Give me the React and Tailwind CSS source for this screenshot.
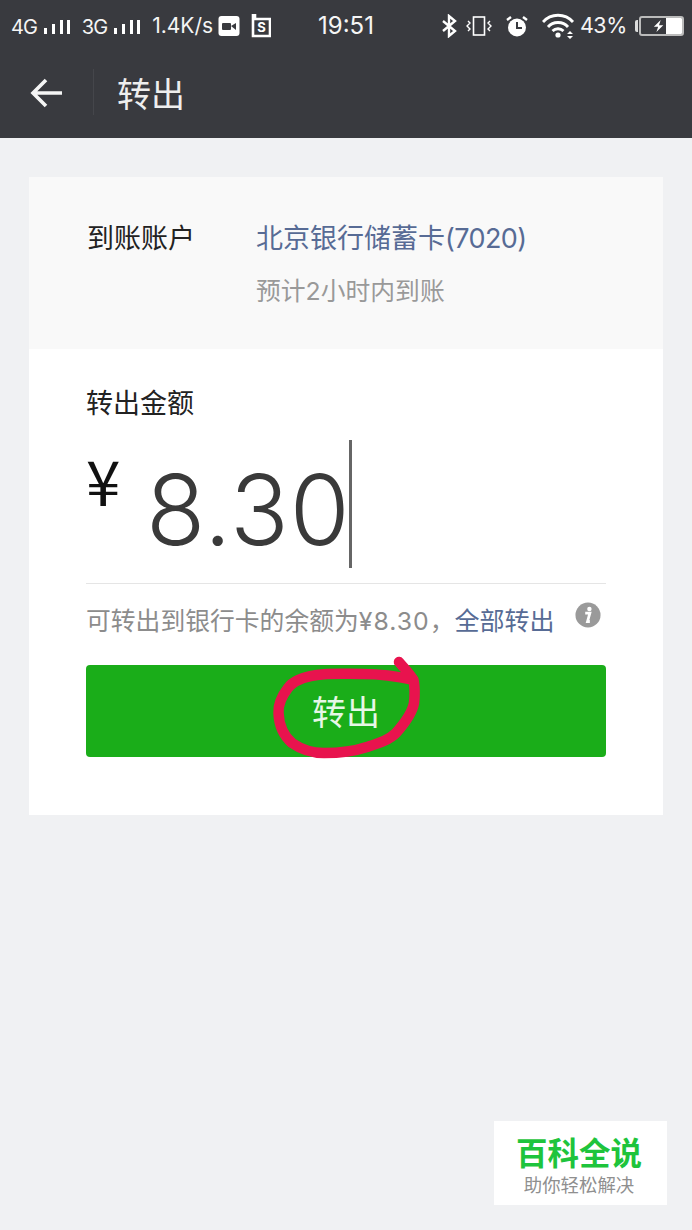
const FONT = "font-['Inter','Noto_Sans_CJK_SC',sans-serif]";

function Bars() {
  return (
    <svg width="28" height="18" viewBox="0 0 28 18" className="shrink-0">
      <rect x="1" y="10" width="3" height="6" fill="#fff" />
      <rect x="9" y="6" width="3" height="10" fill="#fff" />
      <rect x="17" y="2" width="3" height="14" fill="#fff" />
      <rect x="24" y="2" width="3" height="14" fill="#fff" />
    </svg>
  );
}

function StatusBar() {
  return (
    <div className="flex h-[50px] items-center pl-[11px] pt-[1px] text-[#f5f5f5]">
      <span className="text-[20px] tracking-[-1px] leading-none mt-[3px]">4G</span>
      <span className="ml-[6px] mt-[2px]"><Bars /></span>
      <span className="ml-[11px] text-[20px] tracking-[-1px] leading-none mt-[3px]">3G</span>
      <span className="ml-[6px] mt-[2px]"><Bars /></span>
      <span className="ml-[11px] text-[21px] leading-none">1.4K/s</span>
      <svg width="22" height="22" viewBox="0 0 22 22" className="ml-[5px] shrink-0">
        <rect x="0.5" y="1" width="21" height="20" rx="3" fill="#fff" />
        <rect x="4" y="8" width="9" height="7" rx="1" fill="#393a3f" />
        <path d="M13 11l5-3v7z" fill="#393a3f" />
      </svg>
      <svg width="20" height="24" viewBox="0 0 20 24" className="ml-[11px] shrink-0">
        <path d="M2 1v21h17V5H4V1z" fill="none" stroke="#fff" strokeWidth="2.6" />
        <text x="10.5" y="18" fontSize="13" fontWeight="700" textAnchor="middle" fill="#fff" fontFamily="Inter">S</text>
      </svg>
      <span className="ml-[47px] text-[24px] leading-none">19:51</span>
      <svg width="16" height="24" viewBox="0 0 16 24" className="ml-[67px] shrink-0">
        <path d="M2 7l12 10-6 5V2l6 5L2 17" fill="none" stroke="#fff" strokeWidth="2.4" />
      </svg>
      <svg width="28" height="24" viewBox="0 0 28 24" className="ml-[8px] shrink-0">
        <rect x="8.5" y="3" width="11" height="18" fill="none" stroke="#fff" strokeWidth="1.6" />
        <path d="M3 7l2 2-3 3 3 3-2 2M25 7l-2 2 3 3-3 3 2 2" fill="none" stroke="#fff" strokeWidth="1.4" />
      </svg>
      <svg width="24" height="24" viewBox="0 0 24 24" className="ml-[12px] shrink-0">
        <circle cx="12" cy="13.5" r="9" fill="#fff" />
        <path d="M12 8v6h5" fill="none" stroke="#393a3f" strokeWidth="2" />
        <path d="M2 6l4-3M22 6l-4-3" stroke="#fff" strokeWidth="2.4" />
      </svg>
      <svg width="34" height="26" viewBox="0 0 34 26" className="ml-[13px] shrink-0">
        <path d="M1 9c8-9 22-9 30 0M6 14c5-6 15-6 20 0M10.500 18c3-3 8-3 11 0" fill="none" stroke="#fff" strokeWidth="2.800" />
        <circle cx="16" cy="22" r="2.600" fill="#fff" />
        <path d="M28 18l3 3h-6zM28 26l3-3h-6z" fill="#fff" />
      </svg>
      <span className="ml-[4px] text-[21.500px] leading-none tracking-[-0.5px]">43%</span>
      <div className="ml-[8px] w-[3px] h-[12px] bg-[#ddd] rounded-l-[2px]" />
      <div className="ml-[1px] w-[45px] h-[20px] rounded-[3px] border-2 border-[#bbb] flex items-center justify-end overflow-hidden">
        <svg width="12" height="14" viewBox="0 0 14 16" className="shrink-0 mr-[1px]">
          <path d="M9 1L1 9h5l-2 6 8-8H7z" fill="#fff" />
        </svg>
        <div className="w-[16px] h-full bg-white" />
      </div>
    </div>
  );
}

function Header() {
  return (
    <div className="flex h-[88px] items-center pb-[4px]">
      <svg width="34" height="32" viewBox="0 0 34 32" className="ml-[30px] mt-[1px] shrink-0">
        <path d="M32 16H3M16 3L3 16l13 13" fill="none" stroke="#f5f5f5" strokeWidth="3.600" />
      </svg>
      <div className="ml-[29px] w-px h-[46px] bg-[#45464b]" />
      <span className="ml-[23px] mt-[5px] text-[34px] leading-none text-[#eeeeee]">转出</span>
    </div>
  );
}

function Account() {
  return (
    <div className="flex h-[172px] bg-[#f9f9f9] pl-[58px] pt-[42px]">
      <span className="w-[169px] text-[27px] leading-[40px] text-[#222]">到账账户</span>
      <div className="flex flex-col">
        <span className="text-[27px] leading-[40px] text-[#576b95] whitespace-nowrap">
          北京银行储蓄卡<span className="tracking-[-0.6px]">(7020)</span>
        </span>
        <span className="mt-[12px] text-[24.800px] leading-[40px] text-[#999]">预计2小时内到账</span>
      </div>
    </div>
  );
}

function Amount() {
  return (
    <div className="flex flex-col bg-white h-[466px] px-[57px]">
      <span className="mt-[35px] text-[27px] leading-[40px] text-[#222]">转出金额</span>
      <div className="flex h-[128px] mt-[16px] items-start">
        <span className="shrink-0 text-[62px] leading-none text-[#111] mt-[8px] w-[60px] font-['Noto_Sans_CJK_SC',sans-serif]">¥</span>
        <span className="text-[97px] leading-[128px] font-light text-[#3a3a3a] mt-[6px] tracking-[1px]">8.30</span>
        <div className="w-[3.500px] h-[128px] bg-[#666] ml-[-2px]" />
      </div>
      <div className="h-px bg-[#e5e5e5] mt-[15px]" />
      <div className="flex items-center mt-[17px] h-[40px]">
        <span className="text-[24.800px] leading-[40px] text-[#8c8c8c] whitespace-nowrap">
          可转出到银行卡的余额为<span className="tracking-[1px]">¥8.30</span>，
        </span>
        <span className="text-[25px] leading-[40px] text-[#576b95] whitespace-nowrap">全部转出</span>
        <svg width="26" height="26" viewBox="0 0 28 28" className="ml-auto mr-[5px] mt-[-12px] shrink-0">
          <circle cx="14" cy="14" r="13.500" fill="#9a9a9a" />
          <circle cx="15.500" cy="7.500" r="2.400" fill="#fff" />
          <path d="M11 12h5l-2.500 9h2.500" fill="none" stroke="#fff" strokeWidth="3" />
        </svg>
      </div>
      <button className="mt-[24px] h-[92px] shrink-0 rounded-[4px] bg-[#1aad19] pt-[4px] text-[34px] leading-none text-[#e6f7e6]">转出</button>
    </div>
  );
}

export default function App() {
  return (
    <div className={`relative flex h-[1230px] w-[692px] flex-col overflow-hidden bg-[#f0f1f3] ${FONT}`}>
      <div className="h-[138px] shrink-0 bg-[#393a3f]">
        <StatusBar />
        <Header />
      </div>
      <div className="mx-[29px] mt-[39px]">
        <Account />
        <Amount />
      </div>
      <div className="absolute right-[25px] bottom-[25px] flex h-[84px] w-[173px] flex-col items-center bg-white pt-[14px] pr-[3px]">
        <span className="text-[31.500px] font-bold leading-[38px] text-[#1ec43c]">百科全说</span>
        <span className="text-[18.400px] leading-[24px] text-[#8f8f8f]">助你轻松解决</span>
      </div>
      <svg className="absolute left-0 top-0 pointer-events-none" width="692" height="800" viewBox="0 0 692 800">
        <path
          d="M399 662C404 668 410 674 413.500 680C396 676 380 674 363 674C345 674 330 673 317 675C303 677 293 681 288 688C281 697 278 704 278.500 713C279 726 284 736 292 743C302 750 313 753 324 753C340 753 355 751 367 747C379 743 389 740 396 733C404 724 412 714 414 703C415 695 415 688 413.500 680"
          fill="none"
          stroke="#e8134e"
          strokeWidth="10.500"
          strokeLinecap="round"
          strokeLinejoin="round"
        />
      </svg>
    </div>
  );
}
